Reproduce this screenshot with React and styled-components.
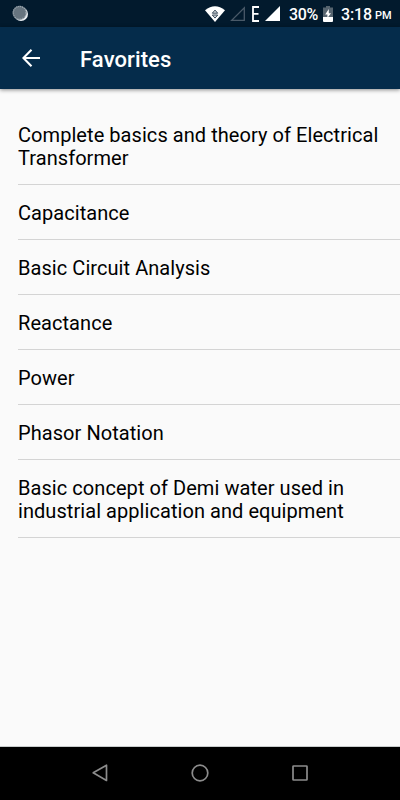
import React from 'react'
import styled, { createGlobalStyle } from 'styled-components'

const favorites = [
    { title: 'Complete basics and theory of Electrical Transformer', height: 78 },
    { title: 'Capacitance' },
    { title: 'Basic Circuit Analysis' },
    { title: 'Reactance' },
    { title: 'Power' },
    { title: 'Phasor Notation' },
    { title: 'Basic concept of Demi water used in industrial application and equipment', height: 78 },
]

const StatusBar = () => (
    <Status>
        <svg width="17" height="17" viewBox="0 0 17 17">
            <circle cx="9" cy="9" r="7" fill="#e9eef2"/>
            <circle cx="7.6" cy="7.8" r="7" fill="#66747f"/>
            <circle cx="7.6" cy="7.8" r="6.4" fill="none" stroke="#a3adb5" strokeWidth="1.2" strokeDasharray="1 1"/>
        </svg>
        <StatusRight>
            <WifiIcon width="20" height="16" viewBox="0 0 20 16">
                <path d="M0 4.2Q10-3.6 20 4.2L10 16Z" fill="#fff"/>
                <path d="M7.3 7.2L10 4.1 12.7 7.2ZM7.3 9L10 12.1 12.7 9Z" fill="#d5dade" stroke="#26394b" strokeWidth="0.9"/>
            </WifiIcon>
            <EmptySignal width="15" height="15" viewBox="0 0 15 15">
                <path d="M1.7 14.3H14.3V1.7Z" fill="none" stroke="#4a5a69" strokeWidth="1.3"/>
            </EmptySignal>
            <NetworkIcon width="7" height="16" viewBox="0 0 7 16">
                <path d="M7 1H1V15H7M1 7.8H6.5" fill="none" stroke="#fff" strokeWidth="1.8"/>
            </NetworkIcon>
            <Signal width="15" height="15" viewBox="0 0 15 15">
                <path d="M0 15H15V0Z" fill="#fff"/>
            </Signal>
            <Percent>30%</Percent>
            <Battery width="10" height="16" viewBox="0 0 10 16">
                <path d="M3 0H7V1.5H10V11H0V1.5H3Z" fill="#56646f"/>
                <path d="M0 11H10V15Q10 16 9 16H1Q0 16 0 15Z" fill="#fff"/>
                <path d="M5.8 3L2.2 8.4H4.4V12L8 7.2H5.8Z" fill="#fff"/>
            </Battery>
            <Time>3:18</Time>
            <Meridiem>PM</Meridiem>
        </StatusRight>
    </Status>
)

const App = () => {
    return (
    <Container>
        <GlobalStyle />
        <StatusBar />
        <Header>
            <BackButton aria-label="Back">
                <svg width="18" height="18" viewBox="0 0 18 18" fill="none" stroke="#fff" strokeWidth="2.1">
                    <path d="M18 9H1.5M9.5 .8L1.4 9L9.5 17.2"/>
                </svg>
            </BackButton>
            <Title>Favorites</Title>
        </Header>
        <List>
            {favorites.map(({ title, height }) => (
                <Item key={title} $height={height}>{title}</Item>
            ))}
        </List>
        <NavBar>
            <svg width="16" height="18" viewBox="0 0 16 18">
                <path d="M14.5 1.2V16.4L1.2 8.8Z" fill="none" stroke="#8c8c8c" strokeWidth="1.7" strokeLinejoin="round"/>
            </svg>
            <svg width="18" height="18" viewBox="0 0 18 18">
                <circle cx="9" cy="9" r="7.8" fill="none" stroke="#8c8c8c" strokeWidth="1.7"/>
            </svg>
            <svg width="16" height="16" viewBox="0 0 16 16">
                <rect x="1" y="1" width="14" height="14" rx="0.6" fill="none" stroke="#8c8c8c" strokeWidth="1.7"/>
            </svg>
        </NavBar>
    </Container>
    )
}

export default App

const GlobalStyle = createGlobalStyle`
    body{
        margin: 0;
        background-color: #fafafa;
    }
    *{
        box-sizing: border-box;
    }
`

const Container = styled.div`
    display: flex;
    flex-direction: column;
    width: 400px;
    height: 800px;
    overflow: hidden;
    background-color: #fafafa;
    font-family: Roboto, sans-serif;
`

const Status = styled.div`
    display: flex;
    align-items: center;
    justify-content: space-between;
    height: 27px;
    padding: 0 8px 0 12px;
    background-color: #021a2d;
    color: #fff;
`

const StatusRight = styled.div`
    display: flex;
    align-items: center;
    height: 27px;
`

const WifiIcon = styled.svg`
    margin-right: 5px;
`

const EmptySignal = styled.svg`
    margin-right: 7px;
`

const NetworkIcon = styled.svg`
    margin-right: 6px;
`

const Signal = styled.svg`
    margin-right: 9px;
`

const Percent = styled.span`
    width: 29px;
    margin-right: 5px;
    font-size: 16px;
    font-weight: 500;
    letter-spacing: -0.3px;
    line-height: 27px;
    padding-top: 1px;
    white-space: nowrap;
`

const Battery = styled.svg`
    margin-right: 8px;
`

const Time = styled(Percent)`
    width: 30px;
    margin-right: 4px;
    letter-spacing: -0.1px;
`

const Meridiem = styled(Percent)`
    width: 17px;
    margin-right: 0;
    padding-top: 4px;
    font-size: 11px;
    letter-spacing: 0;
`

const Header = styled.header`
    display: flex;
    align-items: center;
    height: 62px;
    flex-shrink: 0;
    padding-left: 22px;
    background-color: #052c4b;
    box-shadow: 0 1px 4px rgba(0,0,0,0.45);
`

const BackButton = styled.button`
    display: flex;
    width: 58px;
    padding: 0;
    border: none;
    background: none;
    cursor: pointer;
`

const Title = styled.h1`
    margin: 3px 0 0;
    color: #fff;
    font-size: 22px;
    font-weight: 500;
    letter-spacing: 0.1px;
    line-height: 28px;
`

const List = styled.ul`
    flex: 1;
    margin: 0;
    padding: 18px 0 0 18px;
    list-style: none;
`

const Item = styled.li`
    height: ${({ $height }) => $height || 55}px;
    padding: 17px 18px 0 0;
    border-bottom: 1px solid #d4d4d4;
    color: #000;
    font-size: 20px;
    letter-spacing: 0.06px;
    line-height: 23.4px;
`

const NavBar = styled.nav`
    display: flex;
    align-items: center;
    justify-content: space-between;
    height: 54px;
    padding: 0 92px 1px;
    border-top: 1px solid #c8cccc;
    background-color: #000;
`
